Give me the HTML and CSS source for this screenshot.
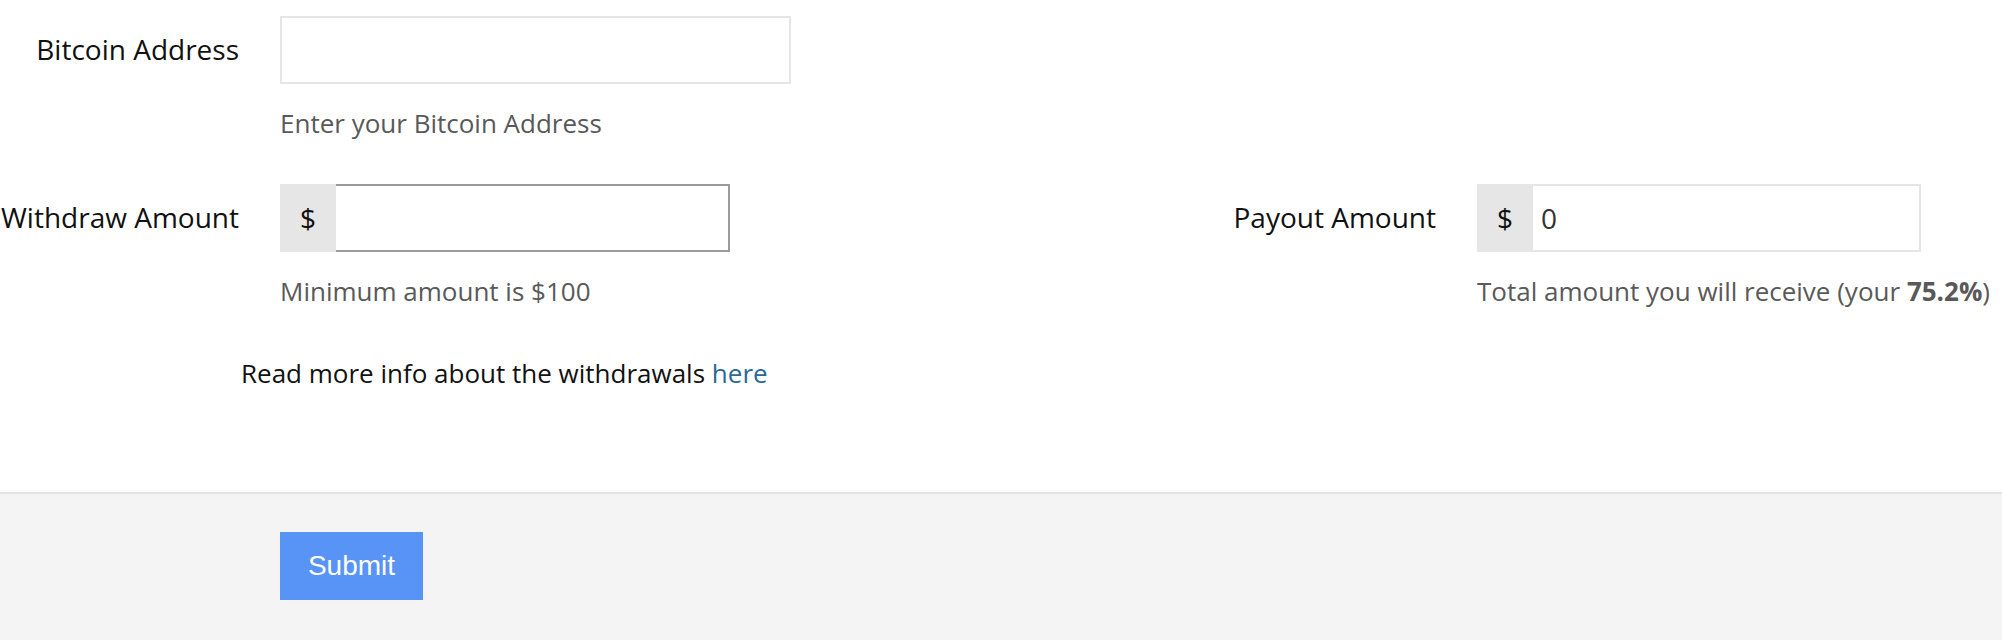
FILE: index.html
```html
<!DOCTYPE html>
<html>
<head>
<meta charset="utf-8">
<link rel="stylesheet" href="styles.css">
</head>
<body>
<form class="form">
  <div class="group group-address">
    <label class="label">Bitcoin Address</label>
    <input class="input input-address" type="text">
  </div>
  <div class="help help-first">Enter your Bitcoin Address</div>

  <div class="group group-amounts">
    <label class="label">Withdraw Amount</label>
    <div class="input-group">
      <span class="addon">$</span>
      <input class="input input-dark" type="text">
    </div>
    <label class="label">Payout Amount</label>
    <div class="input-group">
      <span class="addon">$</span>
      <input class="input" type="text" value="0">
    </div>
  </div>
  <div class="help-row">
    <div class="help help-left">Minimum amount is $100</div>
    <div class="help help-right">Total amount you will receive (your <b>75.2%</b>)</div>
  </div>

  <p class="more">Read more info about the withdrawals <a class="link" href="#">here</a></p>
</form>
<div class="footer">
  <button class="submit" type="button">Submit</button>
</div>
</body>
</html>
```

FILE: styles.css
```css
html, body {
  margin: 0;
  padding: 0;
  background: #ffffff;
  font-family: "Open Sans", "DejaVu Sans", sans-serif;
}

.form {
  padding: 16px 0 100px 0;
  margin: 0;
}

.group {
  display: grid;
  column-gap: 41px;
  align-items: center;
}

.group-address {
  grid-template-columns: 239px 511px;
}

.group-amounts {
  grid-template-columns: 239px 450px 665px 444px;
  margin-top: 42px;
}

.label {
  font-size: 28px;
  color: #111111;
  text-align: right;
  white-space: nowrap;
  margin-top: -2px;
}

.input {
  box-sizing: border-box;
  height: 68px;
  width: 100%;
  border: 2px solid #e6e6e6;
  background: #ffffff;
  padding: 0 8px;
  font-family: "Open Sans", "DejaVu Sans", sans-serif;
  font-size: 28px;
  color: #333333;
  outline: none;
  margin: 0;
  min-width: 0;
}

.input-group {
  display: flex;
  height: 68px;
}

.input-group .input {
  flex: 1;
  border-left-width: 0;
}

.input-dark {
  border-color: #9a9a9a;
}

.addon {
  flex: 0 0 56px;
  display: flex;
  align-items: center;
  justify-content: center;
  background: #e6e6e6;
  font-size: 28px;
  color: #111111;
}

.help {
  font-size: 26px;
  line-height: 37px;
  color: #595959;
  white-space: nowrap;
}

.help-first {
  margin-top: 21px;
  padding-left: 280px;
}

.help-row {
  display: grid;
  grid-template-columns: 1477px auto;
  margin-top: 21px;
}

.help-left {
  padding-left: 280px;
}

.help b {
  font-weight: 700;
}

.more {
  margin: 45px 0 0 0;
  padding-left: 241px;
  font-size: 26px;
  line-height: 37px;
  color: #111111;
}

.link {
  color: #2b6896;
  text-decoration: none;
}

.footer {
  border-top: 2px solid #e4e4e4;
  background: #f4f4f4;
  padding: 38px 0 40px 280px;
}

.submit {
  display: block;
  width: 143px;
  height: 68px;
  border: none;
  background: #5893f6;
  color: #ffffff;
  font-family: "Liberation Sans", Arial, sans-serif;
  font-size: 28px;
  padding: 0;
  margin: 0;
}
```
